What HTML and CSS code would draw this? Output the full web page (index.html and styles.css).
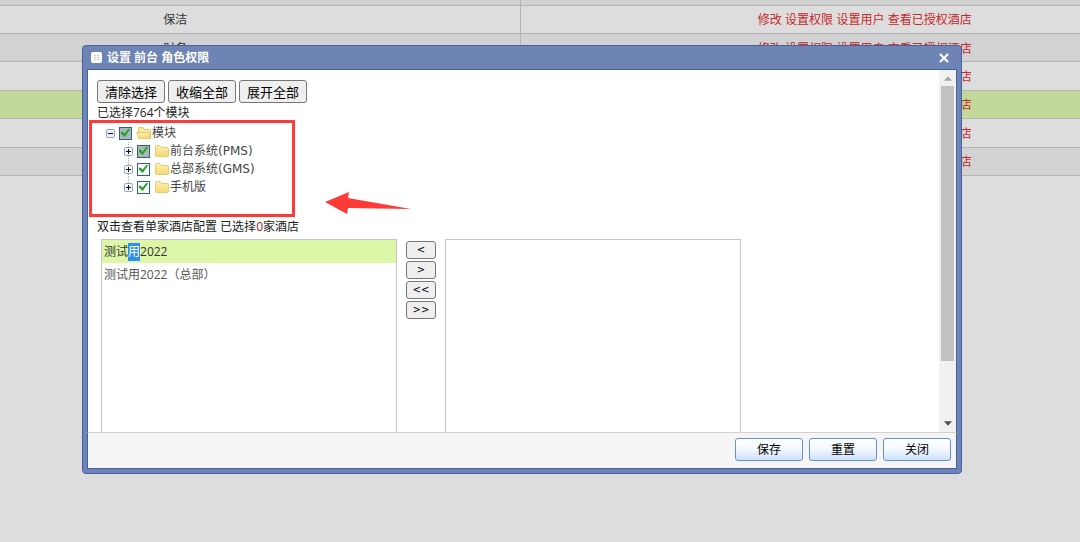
FILE: index.html
```html
<!DOCTYPE html>
<html lang="zh-CN">
<head>
    <meta charset="UTF-8">
    <meta name="viewport" content="width=device-width, initial-scale=1.0">
    <title>设置角色权限</title>
    <link rel="stylesheet" href="styles.css">
</head>
<body>
    <svg class="defs" aria-hidden="true">
        <defs>
            <linearGradient id="folder-fill" x1="0" y1="0" x2="0" y2="1">
                <stop offset="0" stop-color="#fcf1b4"/>
                <stop offset="1" stop-color="#f3d973"/>
            </linearGradient>
            <symbol id="folder" viewBox="0 0 16 16">
                <path d="M1.5 3.5 Q1.5 2.5 2.5 2.5 H6 L7.5 4.5 H13.5 Q14.5 4.5 14.5 5.5 V12.5 Q14.5 13.5 13.5 13.5 H2.5 Q1.5 13.5 1.5 12.5 Z" fill="url(#folder-fill)" stroke="#e6cb6e"/>
            </symbol>
            <symbol id="folder-open" viewBox="0 0 16 16">
                <path d="M2.5 12 V3.5 Q2.5 2.5 3.5 2.5 H7 L8.5 4.5 H13.5 Q14.5 4.5 14.5 5.5 V13.5 H3 Z" fill="#f9e79c" stroke="#e3c662"/>
                <path d="M0.5 7.5 H12 L14.5 13.5 H3 Z" fill="url(#folder-fill)" stroke="#e6cb6e"/>
            </symbol>
            <symbol id="plus" viewBox="0 0 9 9">
                <rect x="0.5" y="0.5" width="8" height="8" rx="1" fill="#f4f6f9" stroke="#8ea3bb"/>
                <path d="M2 4.5 H7 M4.5 2 V7" stroke="#111"/>
            </symbol>
            <symbol id="minus" viewBox="0 0 9 9">
                <rect x="0.5" y="0.5" width="8" height="8" rx="1" fill="#e9eef4" stroke="#8ea3bb"/>
                <path d="M2 4.5 H7" stroke="#111"/>
            </symbol>
        </defs>
    </svg>

    <div class="page">
        <table class="roles">
            <tbody>
                <tr class="even cut"><td></td><td></td></tr>
                <tr>
                    <td>保洁</td>
                    <td><a href="#">修改</a> <a href="#">设置权限</a> <a href="#">设置用户</a> <a href="#">查看已授权酒店</a></td>
                </tr>
                <tr class="even">
                    <td>财务</td>
                    <td><a href="#">修改</a> <a href="#">设置权限</a> <a href="#">设置用户</a> <a href="#">查看已授权酒店</a></td>
                </tr>
                <tr>
                    <td></td>
                    <td><a href="#">修改</a> <a href="#">设置权限</a> <a href="#">设置用户</a> <a href="#">查看已授权酒店</a></td>
                </tr>
                <tr class="current">
                    <td></td>
                    <td><a href="#">修改</a> <a href="#">设置权限</a> <a href="#">设置用户</a> <a href="#">查看已授权酒店</a></td>
                </tr>
                <tr>
                    <td></td>
                    <td><a href="#">修改</a> <a href="#">设置权限</a> <a href="#">设置用户</a> <a href="#">查看已授权酒店</a></td>
                </tr>
                <tr class="even">
                    <td></td>
                    <td><a href="#">修改</a> <a href="#">设置权限</a> <a href="#">设置用户</a> <a href="#">查看已授权酒店</a></td>
                </tr>
            </tbody>
        </table>
    </div>

    <div class="dialog" role="dialog" aria-labelledby="dialog-title">
        <div class="dialog-head">
            <svg class="head-icon" viewBox="0 0 11 11" aria-hidden="true">
                <rect width="11" height="11" rx="2" fill="#fff"/>
                <path d="M3 3.5 H5 M6 3.5 H8 M3 5.5 H5 M6 5.5 H8 M3 7.5 H5 M6 7.5 H8" stroke="#c3cbdc"/>
            </svg>
            <h1 id="dialog-title">设置 前台 角色权限</h1>
            <button class="close" type="button" aria-label="关闭窗口">
                <svg viewBox="0 0 10 10"><path d="M1 1 L9 9 M9 1 L1 9" stroke="#fff" stroke-width="2.2"/></svg>
            </button>
        </div>

        <div class="dialog-main">
            <div class="content">
                <div class="toolbar">
                    <button type="button">清除选择</button>
                    <button type="button">收缩全部</button>
                    <button type="button">展开全部</button>
                </div>
                <p class="note">已选择764个模块</p>

                <ul class="tree">
                    <li>
                        <div class="node">
                            <svg class="toggle"><use href="#minus"/></svg>
                            <input type="checkbox" id="m0" class="partial" checked>
                            <svg class="folder"><use href="#folder-open"/></svg>
                            <label for="m0">模块</label>
                        </div>
                        <ul>
                            <li class="node">
                                <svg class="toggle"><use href="#plus"/></svg>
                                <input type="checkbox" id="m1" class="partial" checked>
                                <svg class="folder"><use href="#folder"/></svg>
                                <label for="m1">前台系统(PMS)</label>
                            </li>
                            <li class="node">
                                <svg class="toggle"><use href="#plus"/></svg>
                                <input type="checkbox" id="m2" checked>
                                <svg class="folder"><use href="#folder"/></svg>
                                <label for="m2">总部系统(GMS)</label>
                            </li>
                            <li class="node">
                                <svg class="toggle"><use href="#plus"/></svg>
                                <input type="checkbox" id="m3" checked>
                                <svg class="folder"><use href="#folder"/></svg>
                                <label for="m3">手机版</label>
                            </li>
                        </ul>
                    </li>
                </ul>

                <p class="note">双击查看单家酒店配置 已选择<span class="count">0</span>家酒店</p>

                <div class="transfer">
                    <ul class="hotels">
                        <li class="active">测试<span class="selected">用</span>2022</li>
                        <li>测试用2022（总部）</li>
                    </ul>
                    <div class="moves">
                        <button type="button">&lt;</button>
                        <button type="button">&gt;</button>
                        <button type="button">&lt;&lt;</button>
                        <button type="button">&gt;&gt;</button>
                    </div>
                    <ul class="hotels"></ul>
                </div>
            </div>
            <div class="scrollbar">
                <svg viewBox="0 0 9 5"><path d="M0 5 L4.5 0 L9 5 Z" fill="#a3a3a3"/></svg>
                <div class="thumb"></div>
                <svg viewBox="0 0 9 5"><path d="M0 0 L4.5 5 L9 0 Z" fill="#505050"/></svg>
            </div>
            <div class="mark-box"></div>
            <svg class="mark-arrow" viewBox="0 0 86 24"><path d="M0 11 L24 1 L23 7 L86 18 L23 17 L22 23 Z" fill="#ff3b38"/></svg>
        </div>

        <div class="dialog-foot">
            <button type="button">保存</button>
            <button type="button">重置</button>
            <button type="button">关闭</button>
        </div>
    </div>
</body>
</html>
```
FILE: styles.css
```css
* {
    box-sizing: border-box;
}
body {
    margin: 0;
    background: #dddddd;
    color: #333;
    font-family: "Open Sans", "Noto Sans CJK SC", sans-serif;
    font-size: 12px;
    line-height: 18px;
}
ul, p, h1 {
    margin: 0;
    padding: 0;
    list-style: none;
}
button {
    padding: 0;
    color: #000;
    font-family: inherit;
    cursor: pointer;
}
.defs {
    position: absolute;
    width: 0;
    height: 0;
}

/* role list behind the dialog */
.page {
    overflow: hidden;
}
.roles {
    width: calc(100% + 300px);
    height: 176px;
    margin-left: -170px;
    table-layout: fixed;
    border-collapse: collapse;
}
.roles td {
    height: 28px;
    padding: 2px 0 0;
    border: 1px solid #b3b3b3;
    text-align: center;
    font-family: "Liberation Sans", "Noto Sans CJK SC", sans-serif;
}
.roles .even {
    background: #d2d2d2;
}
.roles .cut td {
    height: 5px;
    border-top: none;
}
.roles .current {
    background: #c3d99b;
}
.roles a {
    color: #c6282b;
    text-decoration: none;
}

/* dialog */
.dialog {
    position: absolute;
    top: 45px;
    left: 82px;
    right: 118px;
    padding: 0 4px 4px;
    border: 1px solid #43629f;
    border-radius: 4px;
    background: #6e84b5;
}
.dialog-head {
    display: flex;
    align-items: center;
    gap: 5px;
    height: 23px;
    padding: 0 7px 0 4px;
}
.head-icon {
    width: 11px;
    height: 11px;
}
.dialog-head h1 {
    flex: 1;
    color: #fff;
    font-size: 12px;
    line-height: 18px;
}
.close {
    width: 12px;
    height: 18px;
    border: none;
    background: none;
}
.close svg {
    display: block;
    width: 10px;
    height: 10px;
    margin: 0 auto;
}
.dialog-main {
    position: relative;
    display: flex;
    height: 363px;
    border: 1px solid #43629f;
    border-bottom: none;
    background: #fff;
    overflow: hidden;
}
.content {
    flex: 1;
    padding: 10px 9px 0;
}
.toolbar {
    display: flex;
    gap: 3px;
    margin-bottom: 1px;
}
.toolbar button {
    width: 68px;
    height: 23px;
    border: 1px solid #767676;
    border-radius: 3px;
    background: #efefef;
    font-size: 13px;
    line-height: 20px;
}
.note {
    color: #222;
}
.count {
    color: #a02020;
}

/* module tree */
.tree {
    height: 96px;
    padding: 2px 0 0 9px;
    font-family: "DejaVu Sans", "Noto Sans CJK SC", sans-serif;
}
.tree ul {
    padding-left: 18px;
}
.node {
    display: flex;
    align-items: center;
    height: 18px;
    color: #444;
}
.toggle {
    width: 9px;
    height: 9px;
    margin-right: 4px;
}
.tree li li {
    background: repeating-linear-gradient(#aaa 0 1px, transparent 1px 2px) 4px 0 / 1px 100% no-repeat;
}
.tree li li:last-child {
    background-size: 1px 9px;
}
.node input {
    appearance: none;
    width: 13px;
    height: 13px;
    margin: 0 4px 0 0;
    border: 1px solid #2d5f8b;
    background: #f7f7f5;
}
.node input.partial {
    background: #a9b7b7;
}
.node input:checked::before {
    content: "";
    display: block;
    width: 9px;
    height: 9px;
    margin: 1px;
    background: #21a121;
    clip-path: polygon(0 35%, 20% 35%, 38% 58%, 85% 0, 100% 12%, 40% 95%, 0 55%);
}
.node .folder {
    width: 16px;
    height: 16px;
}

/* hotel lists */
.transfer {
    display: flex;
    align-items: flex-start;
    padding: 3px 0 0 4px;
}
.hotels {
    width: 296px;
    height: 260px;
    border: 1px solid #c6c6c6;
}
.hotels li {
    height: 23px;
    padding-left: 2px;
    color: #555;
    line-height: 24px;
}
.hotels .active {
    background: #dcf7a8;
    color: #333;
}
.hotels .selected {
    display: inline-block;
    height: 18px;
    background: #2b8ef0;
    color: #fff;
    line-height: 18px;
}
.moves {
    display: flex;
    flex-direction: column;
    gap: 2px;
    padding: 2px 9px;
}
.moves button {
    width: 30px;
    height: 18px;
    border: 1px solid #767676;
    border-radius: 3px;
    background: #efefef;
    font-family: "DejaVu Sans", sans-serif;
    font-size: 10px;
    line-height: 16px;
}

.scrollbar {
    display: flex;
    flex-direction: column;
    align-items: center;
    width: 17px;
    padding: 6px 0;
    background: #f1f1f1;
}
.scrollbar svg {
    width: 8px;
    height: 5px;
}
.thumb {
    width: 13px;
    height: 275px;
    margin: 5px 0 auto;
    background: #c1c1c1;
}

/* red callout over the tree */
.mark-box {
    position: absolute;
    top: 50px;
    left: 1px;
    width: 206px;
    height: 97px;
    border: 3px solid #ff3b38;
}
.mark-arrow {
    position: absolute;
    top: 121px;
    left: 237px;
    width: 86px;
    height: 24px;
}

.dialog-foot {
    display: flex;
    justify-content: flex-end;
    gap: 6px;
    height: 37px;
    padding: 5px;
    border: 1px solid #43629f;
    border-top-color: #d0d0d0;
    background: #f5f5f5;
}
.dialog-foot button {
    width: 68px;
    height: 23px;
    border: 1px solid #6590c8;
    border-radius: 3px;
    background: linear-gradient(#fff, #f4f9ff 45%, #cfe2fb);
    font-size: 12px;
    line-height: 20px;
}
```
